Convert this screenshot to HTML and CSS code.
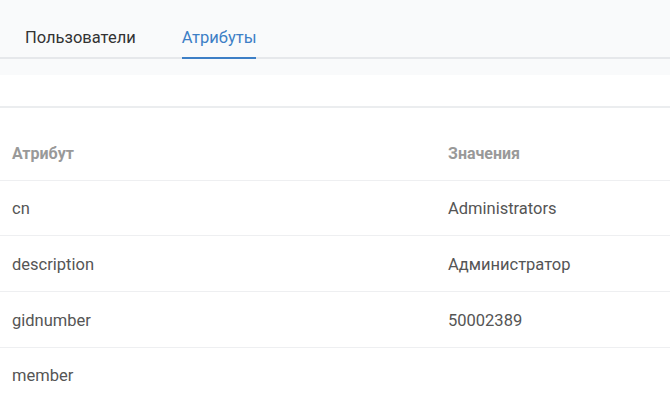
FILE: index.html
```html
<!DOCTYPE html>
<html lang="ru">

<head>
    <meta charset="utf8">
    <title>Группа</title>

    <link rel="stylesheet" href="styles.css">
</head>

<body>
    <div class="top">
        <nav class="tabs">
            <a class="tab">Пользователи</a>
            <a class="tab active">Атрибуты</a>
        </nav>
    </div>

    <div class="toolbar"></div>

    <table class="attrs">
        <thead>
            <tr>
                <th class="name">Атрибут</th>
                <th>Значения</th>
            </tr>
        </thead>
        <tbody>
            <tr>
                <td class="name">cn</td>
                <td>Administrators</td>
            </tr>
            <tr>
                <td class="name">description</td>
                <td>Администратор</td>
            </tr>
            <tr>
                <td class="name">gidnumber</td>
                <td>50002389</td>
            </tr>
            <tr>
                <td class="name">member</td>
                <td></td>
            </tr>
        </tbody>
    </table>
</body>

</html>
```

FILE: styles.css
```css
* {
    box-sizing: border-box;
}

body {
    margin: 0;
    font-family: Roboto, "Liberation Sans", sans-serif;
    font-size: 16.5px;
    color: #555;
    background: white;
    overflow: hidden;
}

.top {
    background-color: #f9fafb;
    padding-bottom: 16px;
}

.tabs {
    display: flex;
    column-gap: 46px;
    padding-left: 25px;
    border-bottom: 2px solid #e6e8eb;
}

.tabs .tab {
    padding: 28px 0 9px;
    line-height: 20px;
    color: #333;
    border-bottom: 2px solid transparent;
    margin-bottom: -2px;
    cursor: pointer;
}

.tabs .tab.active {
    color: #3d7fc6;
    border-bottom-color: #3d7fc6;
}

.toolbar {
    height: 33px;
    border-bottom: 2px solid #ebedef;
}

table.attrs {
    width: 100%;
    border-collapse: collapse;
    margin-top: 18px;
}

table.attrs th {
    text-align: left;
    font-size: 16px;
    font-weight: bold;
    color: #999;
    height: 54px;
    padding: 1px 12px 0;
    border-bottom: 1px solid #eeeff1;
}

table.attrs td {
    height: 55.7px;
    padding: 2px 12px 0;
    border-bottom: 1px solid #eeeff1;
}

table.attrs .name {
    width: 436px;
}
```
